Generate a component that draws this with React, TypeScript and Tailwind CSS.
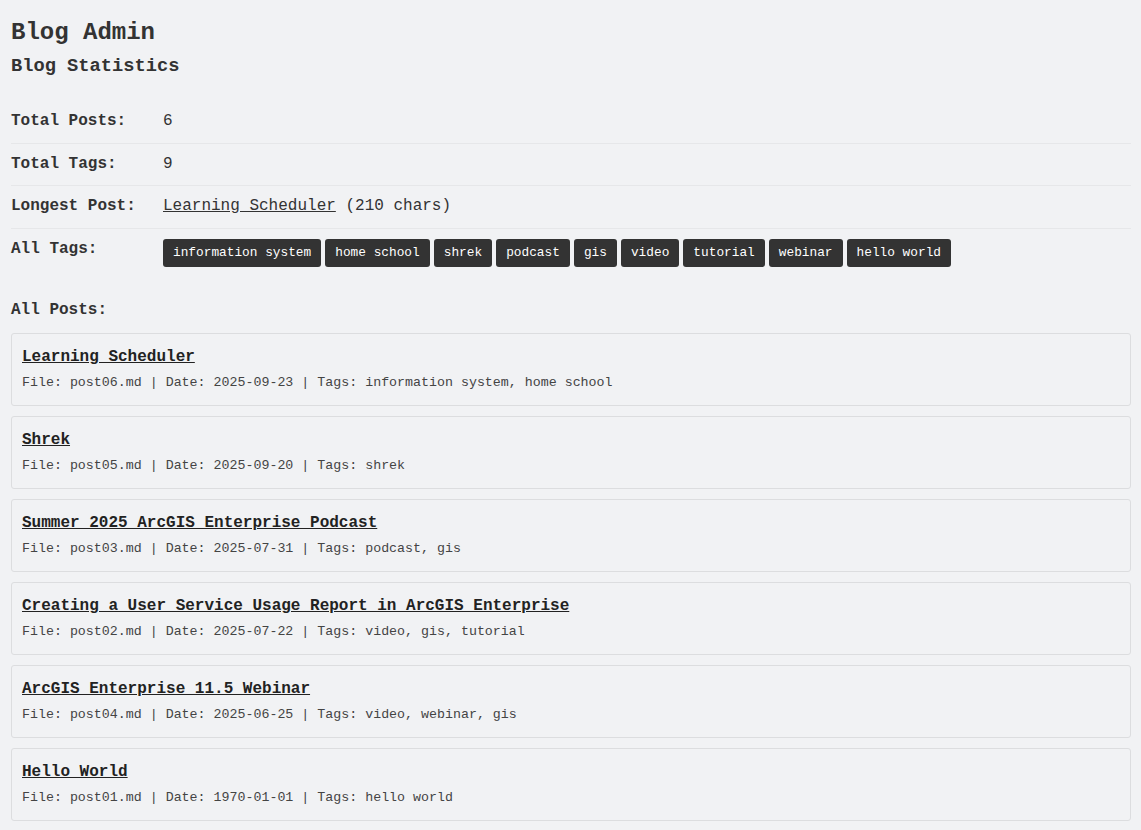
import React from "react";

const tags = ["information system", "home school", "shrek", "podcast", "gis", "video", "tutorial", "webinar", "hello world"];

const posts = [
  { title: "Learning Scheduler", file: "post06.md", date: "2025-09-23", tags: "information system, home school" },
  { title: "Shrek", file: "post05.md", date: "2025-09-20", tags: "shrek" },
  { title: "Summer 2025 ArcGIS Enterprise Podcast", file: "post03.md", date: "2025-07-31", tags: "podcast, gis" },
  { title: "Creating a User Service Usage Report in ArcGIS Enterprise", file: "post02.md", date: "2025-07-22", tags: "video, gis, tutorial" },
  { title: "ArcGIS Enterprise 11.5 Webinar", file: "post04.md", date: "2025-06-25", tags: "video, webinar, gis" },
  { title: "Hello World", file: "post01.md", date: "1970-01-01", tags: "hello world" },
];

export default function App() {
  return (
    <div className="min-h-screen bg-[#f1f2f4] text-[#333] font-['Liberation_Mono','Courier_New',monospace] pl-[11px] pr-[10px] pt-[18px] pb-[8px]">
      <h1 className="text-[24px] font-bold leading-[30px]">Blog Admin</h1>
      <h2 className="mt-[7px] text-[18.72px] font-bold leading-[22px]">Blog Statistics</h2>

      <div className="mt-[24px] text-[16px] leading-[21.5px]">
        <div className="flex py-[10px] border-b border-[#e6e7e9]">
          <div className="w-[152px] shrink-0 font-bold">Total Posts:</div>
          <div>6</div>
        </div>
        <div className="flex py-[10px] border-b border-[#e6e7e9]">
          <div className="w-[152px] shrink-0 font-bold">Total Tags:</div>
          <div>9</div>
        </div>
        <div className="flex py-[10px] border-b border-[#e6e7e9]">
          <div className="w-[152px] shrink-0 font-bold">Longest Post:</div>
          <div>
            <a href="#" className="underline text-[#333]">Learning Scheduler</a> (210 chars)
          </div>
        </div>
        <div className="flex py-[10px]">
          <div className="w-[152px] shrink-0 font-bold">All Tags:</div>
          <div className="flex flex-wrap gap-[4px]">
            {tags.map((t) => (
              <span key={t} className="h-[28px] px-[10px] flex items-center bg-[#333] text-white text-[12.8px] rounded-[3px]">
                {t}
              </span>
            ))}
          </div>
        </div>
      </div>

      <div className="mt-[22px] text-[16px] font-bold leading-[22px]">All Posts:</div>

      <div className="mt-[12px] flex flex-col gap-[10px]">
        {posts.map((p) => (
          <div key={p.file} className="border border-[#dcdddf] rounded-[3px] px-[10px] pt-[11px] pb-[12px]">
            <a href="#" className="block text-[16px] leading-[24px] font-bold underline text-[#222]">
              <span>{p.title}</span>
            </a>
            <div className="mt-[4px] text-[13.3px] leading-[20px] text-[#444]">
              File: {p.file} | Date: {p.date} | Tags: {p.tags}
            </div>
          </div>
        ))}
      </div>
    </div>
  );
}
